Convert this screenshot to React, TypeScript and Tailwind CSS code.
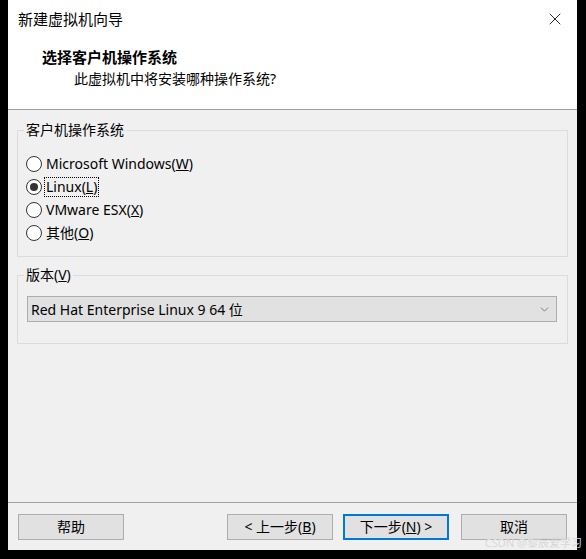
import React from "react";
import { ChevronDown, X } from "lucide-react";

const font = { fontFamily: '"Noto Sans", "Noto Sans CJK SC", sans-serif' };

function Radio({ checked, children }: { checked?: boolean; children: React.ReactNode }) {
  return (
    <label className="flex items-center h-[23px] gap-[4px]">
      <span className="w-[16px] h-[16px] rounded-full border border-[#333] bg-white flex items-center justify-center">
        {checked && <span className="w-[8px] h-[8px] rounded-full bg-[#333]" />}
      </span>
      <span className={checked ? "outline outline-1 outline-dotted outline-black leading-[18px] px-[1px] -ml-[1px]" : ""}>
        {children}
      </span>
    </label>
  );
}

function Btn({ primary, children }: { primary?: boolean; children: React.ReactNode }) {
  return (
    <button
      className={
        "w-[106px] h-[26px] bg-[#e1e1e1] text-[14px] text-black flex items-center justify-center " +
        (primary ? "border-2 border-[#0078d7]" : "border border-[#adadad]")
      }
    >
      {children}
    </button>
  );
}

export default function App() {
  return (
    <div className="w-[586px] h-[559px] bg-black pl-[8px] text-[14px] text-black" style={font}>
      <div className="w-[569px] h-[550px] bg-[#f0f0f0] flex flex-col">
        <header className="h-[110px] bg-white border-b border-[#a0a0a0] flex flex-col">
          <div className="flex justify-between items-center h-[38px] pl-[10px] pr-[12px]">
            <span className="text-[15px]">新建虚拟机向导</span>
            <X size={20} strokeWidth={1} className="text-black" />
          </div>
          <h1 className="pl-[34px] pt-[8px] text-[15px] font-bold leading-[22px]">选择客户机操作系统</h1>
          <p className="pl-[66px] mt-[1px] text-[14px] leading-[20px]">此虚拟机中将安装哪种操作系统?</p>
        </header>

        <div className="flex flex-col px-[9px] pt-[10px] gap-[8px]">
          <fieldset className="border border-[#dcdcdc] h-[137px] pl-[8px] pt-[12px]">
            <legend className="-ml-[2px] px-[2px] leading-[20px]">客户机操作系统</legend>
            <Radio>
              Microsoft Windows(<u>W</u>)
            </Radio>
            <Radio checked>
              Linux(<u>L</u>)
            </Radio>
            <Radio>
              VMware ESX(<u>X</u>)
            </Radio>
            <Radio>
              其他(<u>O</u>)
            </Radio>
          </fieldset>

          <fieldset className="border border-[#dcdcdc] h-[79px] pl-[9px] pr-[10px] pt-[11px]">
            <legend className="-ml-[3px] px-[2px] leading-[20px]">
              版本(<u>V</u>)
            </legend>
            <div className="h-[26px] bg-[#e1e1e1] border border-[#adadad] flex items-center justify-between pl-[3px] pr-[5px]">
              <span>Red Hat Enterprise Linux 9 64 位</span>
              <ChevronDown size={13} strokeWidth={1.2} className="text-[#444]" />
            </div>
          </fieldset>
        </div>

        <div className="mt-auto border-t border-[#a0a0a0] h-[48px] flex items-center px-[10px]">
          <Btn>帮助</Btn>
          <div className="ml-auto flex gap-[10px]">
            <Btn>
              &lt; 上一步(<u>B</u>)
            </Btn>
            <Btn primary>
              下一步(<u>N</u>) &gt;
            </Btn>
            <div className="ml-[2px]">
              <Btn>取消</Btn>
            </div>
          </div>
        </div>
      </div>
      <div className="flex justify-end -mt-[14px] pr-[4px]">
        <span className="text-[11px] text-[#d8d8d8] leading-[14px]">CSDN @黎辰爱学习</span>
      </div>
    </div>
  );
}
